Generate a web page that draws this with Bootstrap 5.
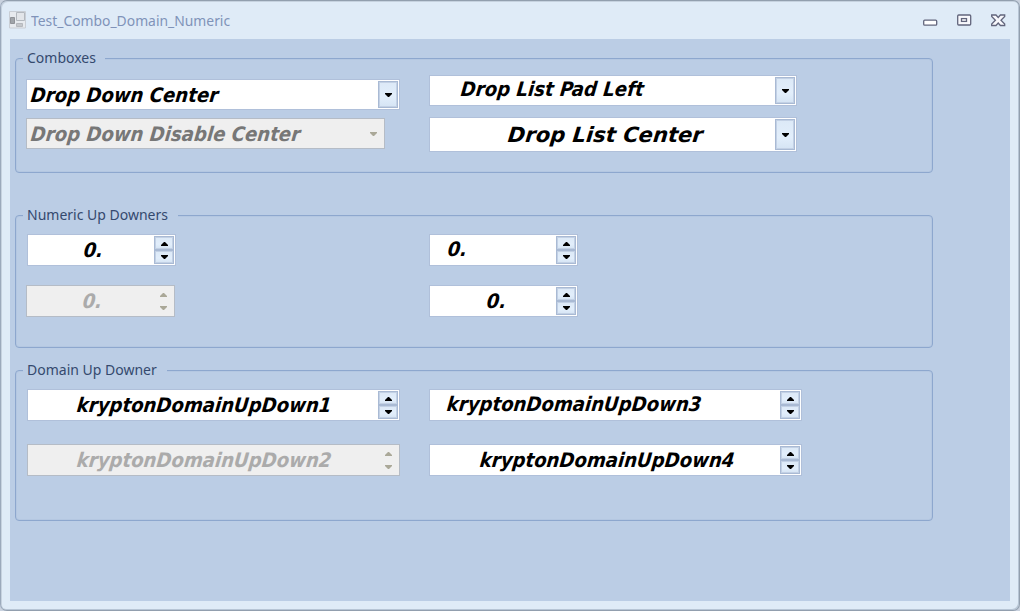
<!DOCTYPE html>
<html lang="en">
<head>
<meta charset="utf-8">
<meta name="viewport" content="width=device-width, initial-scale=1">
<title>Test_Combo_Domain_Numeric</title>
<link rel="stylesheet" href="https://cdn.jsdelivr.net/npm/bootstrap@5.3.0/dist/css/bootstrap.min.css">
<style>
body{background:#c9d2df;font-family:"Noto Sans","Open Sans",sans-serif;font-size:14px;color:#34496e;width:1020px;height:611px;overflow:hidden}
.win{height:611px;background:#dfebf7;border:1px solid #929fae;border-left-color:#9ba9bb;border-radius:7px;padding:0 9px 9px;box-shadow:inset 1px 1px 0 #c6d2df,inset -1px -1px 0 #b7c5d5}
.titlebar{height:38px;padding:0 4px 0 0}
.app-icon{margin-left:-1px}
.titlebar .ttl{color:#8093b9;font-size:14.5px;line-height:20px;margin-left:5px;transform:scaleX(.957);transform-origin:0 50%}
.captions{gap:18px;padding-bottom:1px}
.client{height:562px;background:#bbcde5;padding:12px 0 0 5px}
.client section{position:relative;width:918px;border:1px solid #8da7ce;border-radius:4px;padding-left:10px;box-shadow:inset 0 0 0 1px #b4c7e1}
.client h2{position:absolute;left:7px;top:-12px;height:22px;line-height:22px;font-size:14px;font-weight:400;margin:0;padding-left:4px;background:#bbcde5;color:#34496e}
.l1{width:82px}.l2{width:155px}.l3{width:144px}
.client h2 span,.ttl,.val span{display:inline-block;white-space:nowrap;transform-origin:0 50%}
.g1{height:115px;margin-top:7px}.g2{height:133px;margin-top:42px}.g3{height:151px;margin-top:22px}
.cols{display:grid;grid-template-columns:403px 1fr}
.g1 .stack{padding-top:20px}.g1 .stack+.stack{padding-top:16px}
.g2 .stack,.g3 .stack{padding-top:18px}
.field{background:#fff;border:1px solid #b0c0da;height:32px;display:flex;padding:1px}
.field.off{background:#efefef;border-color:#b5bcc6}
.val{flex:1;color:#000;font-family:"DejaVu Sans Condensed","DejaVu Sans",sans-serif;font-weight:700;font-style:italic;font-size:20px;line-height:28px}
.val span{margin-left:1px;transform:skewX(-6deg) scaleX(1.006)}
.off .val{color:#ababab}.c2 .val{color:#777}
.dd{width:20px;background:linear-gradient(#dce9f7,#e2eefb 60%,#d5e4f4);border:1px solid #a9bad4;box-shadow:inset 0 0 0 1px #c3d1e5;display:flex;align-items:center;justify-content:center;padding-left:1px}
.off .dd{background:none;border-color:transparent;box-shadow:none;padding-left:0}
.spin{width:20px;display:flex;flex-direction:column}
.spin .dd{height:14px}
.spin .dd:first-child{padding-top:1px}
svg{display:block}.tri{fill:#000}.off .tri{fill:#aaa898}
.c1{width:374px;height:31px}.c2{width:359px;height:31px;margin-top:8px}
.c3{width:368px;height:31px}.c4{width:368px;height:35px;margin-top:11px}
.c1 .val,.c2 .val{padding-left:2px;line-height:28px}
.c3 .val{padding-left:29px;line-height:24px}.c4 .val{padding-left:76px;line-height:33px;font-size:21px}
.c4 .val span{transform:skewX(-6deg) scaleX(1.115)}
.n{width:149px}.n2,.n4{margin-top:19px}.n1,.d1,.d2{margin-left:1px}.field.n2{margin-left:0}
.n1 .val{padding-left:54px;line-height:28px}.n2 .val{padding-left:54px;line-height:28px}.n3 .val{padding-left:16px;line-height:26px}.n4 .val{padding-left:55px;line-height:29px}
.d{width:373px}.d2,.d4{margin-top:23px}
.d1 .val,.d2 .val{padding-left:48px;line-height:28px}.d3 .val{padding-left:15px;line-height:26px}.d4 .val{padding-left:48px;line-height:28px}
.d1 .val span,.d2 .val span{margin-left:0}
</style>
<script src="https://cdn.jsdelivr.net/npm/bootstrap@5.3.0/dist/js/bootstrap.bundle.min.js"></script>
</head>
<body>
<svg width="0" height="0" class="position-absolute"><defs>
<symbol id="dn" viewBox="0 0 7 4"><path d="M0 0H7V1L4 4H3L0 1Z"/></symbol>
<symbol id="up" viewBox="0 0 7 4"><path d="M0 4H7V3L4 0H3L0 3Z"/></symbol>
</defs></svg>
<div class="win">
<header class="titlebar d-flex align-items-center">
<svg class="app-icon" width="17" height="18" viewBox="0 0 17 18"><path fill="#e7eaee" stroke="#c9ced5" d="M.5.5H16.500V17H.5Z"/><path fill="#e2e5e9" stroke="#b3b8be" d="M7.500 1.500h8v8h-8z"/><path fill="#a0a4a9" stroke="#909398" d="M1.500 6.500h4v6h-4z"/><path fill="#c4c7cb" stroke="#b6b9be" d="M7.500 12.500h6v3h-6z"/></svg>
<span class="ttl">Test_Combo_Domain_Numeric</span>
<div class="captions ms-auto d-flex">
<svg width="16" height="16" viewBox="0 0 16 16"><rect x="1.700" y="8.200" width="13" height="5" rx="1" fill="#fff" stroke="#62657c" stroke-width="1.300"/></svg>
<svg width="16" height="16" viewBox="0 0 16 16"><rect x="1.700" y="3" width="13" height="10" rx="1" fill="#f8f8fc" stroke="#62657c" stroke-width="1.300"/><rect x="5.500" y="6.600" width="5" height="2.800" fill="#fff" stroke="#62657c" stroke-width="1.300"/></svg>
<svg width="16" height="16" viewBox="0 0 16 16"><path d="M1.700 3H6L8.200 5.500 10.400 3H14.700V4.500L11 8.200 14.700 12V13.500H10.400L8.200 11 6 13.500H1.700V12L5.400 8.200 1.700 4.500Z" fill="#f8f8fc" stroke="#62657c" stroke-width="1.300"/></svg>
</div>
</header>
<main class="client">
<section class="g1"><h2 class="l1"><span>Comboxes</span></h2>
<div class="cols"><div class="stack">
<div class="field c1"><div class="val"><span>Drop Down Center</span></div><div class="dd"><svg class="tri" width="7" height="4"><use href="#dn"/></svg></div></div>
<div class="field off c2"><div class="val"><span>Drop Down Disable Center</span></div><div class="dd"><svg class="tri" width="7" height="4"><use href="#dn"/></svg></div></div>
</div><div class="stack">
<div class="field c3"><div class="val"><span>Drop List Pad Left</span></div><div class="dd"><svg class="tri" width="7" height="4"><use href="#dn"/></svg></div></div>
<div class="field c4"><div class="val"><span>Drop List Center</span></div><div class="dd"><svg class="tri" width="7" height="4"><use href="#dn"/></svg></div></div>
</div></div></section>
<section class="g2"><h2 class="l2"><span>Numeric Up Downers</span></h2>
<div class="cols"><div class="stack">
<div class="field n n1"><div class="val"><span>0.</span></div><div class="spin"><div class="dd"><svg class="tri" width="7" height="4"><use href="#up"/></svg></div><div class="dd"><svg class="tri" width="7" height="4"><use href="#dn"/></svg></div></div></div>
<div class="field off n n2"><div class="val"><span>0.</span></div><div class="spin"><div class="dd"><svg class="tri" width="7" height="4"><use href="#up"/></svg></div><div class="dd"><svg class="tri" width="7" height="4"><use href="#dn"/></svg></div></div></div>
</div><div class="stack">
<div class="field n n3"><div class="val"><span>0.</span></div><div class="spin"><div class="dd"><svg class="tri" width="7" height="4"><use href="#up"/></svg></div><div class="dd"><svg class="tri" width="7" height="4"><use href="#dn"/></svg></div></div></div>
<div class="field n n4"><div class="val"><span>0.</span></div><div class="spin"><div class="dd"><svg class="tri" width="7" height="4"><use href="#up"/></svg></div><div class="dd"><svg class="tri" width="7" height="4"><use href="#dn"/></svg></div></div></div>
</div></div></section>
<section class="g3"><h2 class="l3"><span>Domain Up Downer</span></h2>
<div class="cols"><div class="stack">
<div class="field d d1"><div class="val"><span>kryptonDomainUpDown1</span></div><div class="spin"><div class="dd"><svg class="tri" width="7" height="4"><use href="#up"/></svg></div><div class="dd"><svg class="tri" width="7" height="4"><use href="#dn"/></svg></div></div></div>
<div class="field off d d2"><div class="val"><span>kryptonDomainUpDown2</span></div><div class="spin"><div class="dd"><svg class="tri" width="7" height="4"><use href="#up"/></svg></div><div class="dd"><svg class="tri" width="7" height="4"><use href="#dn"/></svg></div></div></div>
</div><div class="stack">
<div class="field d d3"><div class="val"><span>kryptonDomainUpDown3</span></div><div class="spin"><div class="dd"><svg class="tri" width="7" height="4"><use href="#up"/></svg></div><div class="dd"><svg class="tri" width="7" height="4"><use href="#dn"/></svg></div></div></div>
<div class="field d d4"><div class="val"><span>kryptonDomainUpDown4</span></div><div class="spin"><div class="dd"><svg class="tri" width="7" height="4"><use href="#up"/></svg></div><div class="dd"><svg class="tri" width="7" height="4"><use href="#dn"/></svg></div></div></div>
</div></div></section>
</main>
</div>
</body>
</html>
